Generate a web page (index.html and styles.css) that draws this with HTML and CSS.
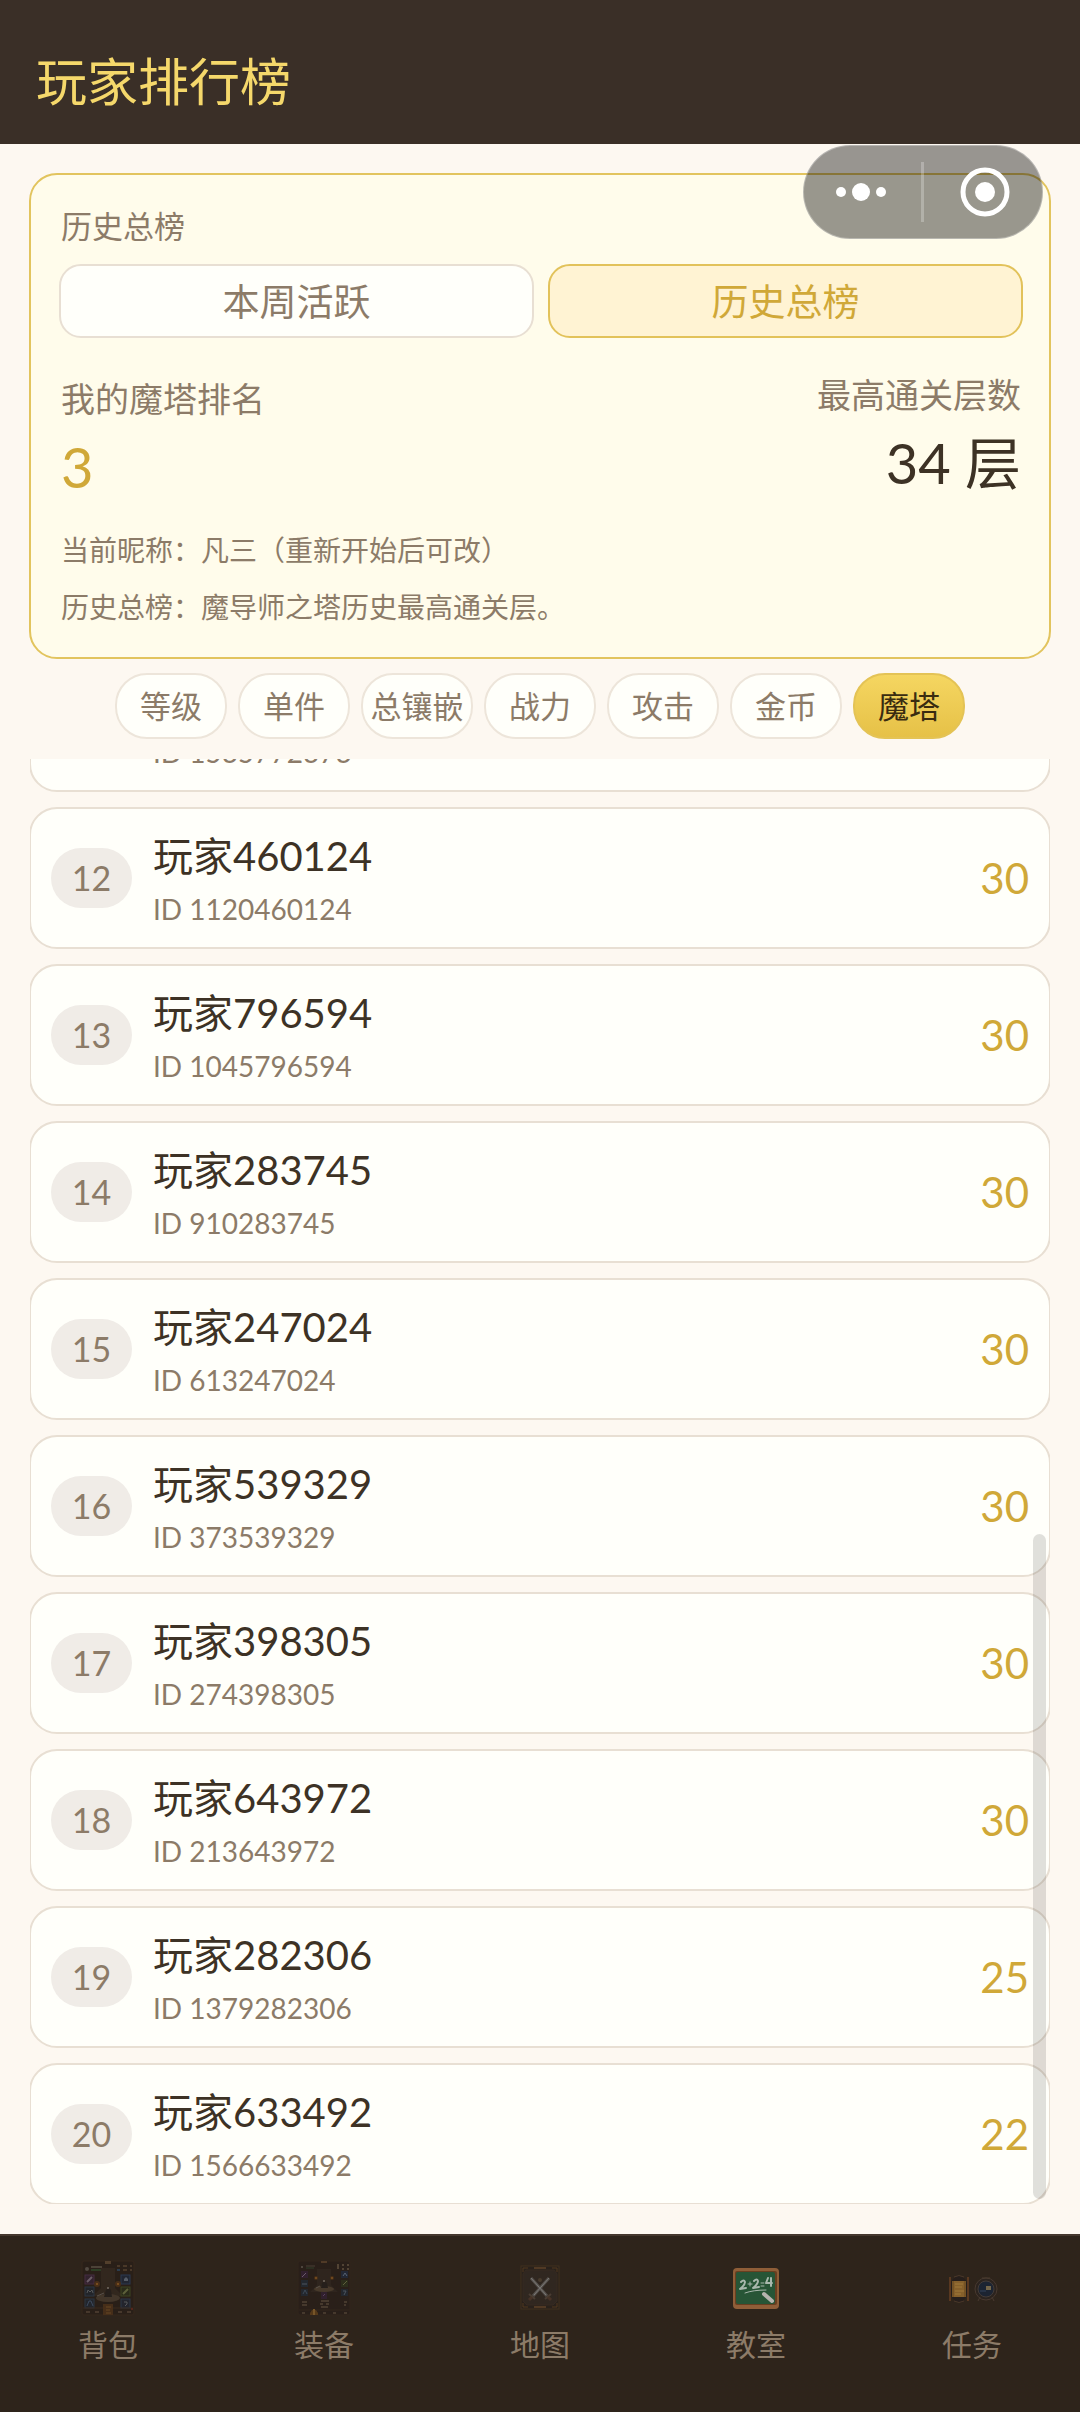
FILE: index.html
```html
<!DOCTYPE html>
<html lang="zh-Hans">
<head>
    <meta charset="UTF-8">
    <meta name="viewport" content="width=device-width, initial-scale=1.0">
    <title>玩家排行榜</title>
    <link rel="stylesheet" href="styles.css">
</head>
<body>

<header class="header">
    <h1>玩家排行榜</h1>
</header>

<div class="capsule">
    <button type="button" class="capsule-btn" aria-label="更多">
        <svg width="50" height="20" viewBox="0 0 50 20"><circle cx="5" cy="10" r="5"/><circle cx="25" cy="10" r="9"/><circle cx="45" cy="10" r="5"/></svg>
    </button>
    <span class="capsule-line"></span>
    <button type="button" class="capsule-btn capsule-close" aria-label="关闭">
        <svg width="50" height="50" viewBox="0 0 50 50"><circle class="ring" cx="25" cy="25" r="22"/><circle cx="25" cy="25" r="10"/></svg>
    </button>
</div>

<main class="main">
    <section class="card">
        <div class="card-label">历史总榜</div>
        <div class="tabs">
            <button type="button" class="tab">本周活跃</button>
            <button type="button" class="tab active">历史总榜</button>
        </div>
        <div class="stats">
            <div class="stat stat-rank">
                <div class="stat-label">我的魔塔排名</div>
                <div class="stat-value">3</div>
            </div>
            <div class="stat stat-best">
                <div class="stat-label">最高通关层数</div>
                <div class="stat-value">34 层</div>
            </div>
        </div>
        <div class="notes">
            <p>当前昵称：凡三（重新开始后可改）</p>
            <p>历史总榜：魔导师之塔历史最高通关层。</p>
        </div>
    </section>

    <div class="filters">
        <button type="button" class="filter">等级</button>
        <button type="button" class="filter">单件</button>
        <button type="button" class="filter">总镶嵌</button>
        <button type="button" class="filter">战力</button>
        <button type="button" class="filter">攻击</button>
        <button type="button" class="filter">金币</button>
        <button type="button" class="filter active">魔塔</button>
    </div>

    <div class="list-wrap">
        <ol class="list">
            <li class="row">
                <span class="rank"></span>
                <div class="player"><div class="name"></div><div class="uid">ID 1535772373</div></div>
            </li>
            <li class="row">
                <span class="rank">12</span>
                <div class="player"><div class="name">玩家460124</div><div class="uid">ID 1120460124</div></div>
                <span class="score">30</span>
            </li>
            <li class="row">
                <span class="rank">13</span>
                <div class="player"><div class="name">玩家796594</div><div class="uid">ID 1045796594</div></div>
                <span class="score">30</span>
            </li>
            <li class="row">
                <span class="rank">14</span>
                <div class="player"><div class="name">玩家283745</div><div class="uid">ID 910283745</div></div>
                <span class="score">30</span>
            </li>
            <li class="row">
                <span class="rank">15</span>
                <div class="player"><div class="name">玩家247024</div><div class="uid">ID 613247024</div></div>
                <span class="score">30</span>
            </li>
            <li class="row">
                <span class="rank">16</span>
                <div class="player"><div class="name">玩家539329</div><div class="uid">ID 373539329</div></div>
                <span class="score">30</span>
            </li>
            <li class="row">
                <span class="rank">17</span>
                <div class="player"><div class="name">玩家398305</div><div class="uid">ID 274398305</div></div>
                <span class="score">30</span>
            </li>
            <li class="row">
                <span class="rank">18</span>
                <div class="player"><div class="name">玩家643972</div><div class="uid">ID 213643972</div></div>
                <span class="score">30</span>
            </li>
            <li class="row">
                <span class="rank">19</span>
                <div class="player"><div class="name">玩家282306</div><div class="uid">ID 1379282306</div></div>
                <span class="score">25</span>
            </li>
            <li class="row">
                <span class="rank">20</span>
                <div class="player"><div class="name">玩家633492</div><div class="uid">ID 1566633492</div></div>
                <span class="score">22</span>
            </li>
        </ol>
        <div class="scrollbar"></div>
    </div>
</main>

<nav class="nav">
    <a href="#bag" class="nav-item">
        <svg class="nav-icon dim" viewBox="0 0 56 56">
            <rect x="2" y="1" width="52" height="54" rx="2" fill="#261d17" stroke="#3b2a1d"/>
            <path d="M21 8h14v20l8 8H13l8-8z" fill="#352921"/>
            <rect x="25" y="1" width="6" height="3" fill="#6b5138"/>
            <circle cx="7" cy="9" r="2" fill="#6a625b"/>
            <path d="M11 7h11" stroke="#60564b" stroke-width="2"/>
            <path d="M11 10h10" stroke="#2d4f2a" stroke-width="2"/>
            <path d="M37 6h3M43 6h4M50 6h2M43 10h4M50 10h2" stroke="#5b4632" stroke-width="2"/>
            <path d="M37 10h3" stroke="#2b4f70" stroke-width="2"/>
            <rect x="5" y="15" width="9" height="9" fill="#352139" stroke="#54305b"/>
            <path d="M7 22l5-5" stroke="#94809a" stroke-width="2"/>
            <rect x="5" y="27" width="9" height="9" fill="#1c2735" stroke="#2a425c"/>
            <path d="M7 33l1-3 2 2 2-2 1 3" stroke="#6f7a83" fill="none"/>
            <rect x="5" y="39" width="9" height="9" fill="#1b2637" stroke="#29405c"/>
            <path d="M7 46l2-5h2l2 5" stroke="#47648a" fill="none"/>
            <rect x="41" y="15" width="9" height="9" fill="#1b2840" stroke="#2a4774"/>
            <path d="M44 21v-2l2-2 2 2v2z" fill="#71829a"/>
            <rect x="41" y="27" width="9" height="9" fill="#28301a" stroke="#475a26"/>
            <path d="M43 34l5-5" stroke="#7c8b50" stroke-width="2"/>
            <rect x="41" y="39" width="9" height="9" fill="#1c2739" stroke="#2b4668"/>
            <path d="M44 42h3v2l-2 2" stroke="#717a84" fill="none"/>
            <circle cx="17" cy="24" r="3" fill="#5b3515"/><circle cx="17" cy="24" r="1" fill="#c47a26"/>
            <circle cx="38" cy="24" r="3" fill="#5b3515"/><circle cx="38" cy="24" r="1" fill="#c47a26"/>
            <ellipse cx="28" cy="38" rx="12" ry="4" fill="#514334"/>
            <path d="M24 37l2-7 2-3 3 3 1 7z" fill="#211d1c"/>
            <circle cx="28" cy="28" r="1" fill="#a59c92"/>
            <path d="M17 36l7-3" stroke="#77706a"/>
            <path d="M3 48h50" stroke="#402d1e"/>
            <rect x="23" y="44" width="10" height="11" fill="#573518"/>
            <path d="M26 47h5M26 50h4M26 53h5" stroke="#8e602b"/>
            <path d="M6 52h4M15 52h4M38 52h4M47 52h4" stroke="#584638" stroke-width="2"/>
            <circle cx="52" cy="49" r="1" fill="#872a20"/>
        </svg>
        <span>背包</span>
    </a>
    <a href="#gear" class="nav-item">
        <svg class="nav-icon dim" viewBox="0 0 56 56">
            <rect x="2" y="1" width="52" height="54" rx="2" fill="#261d18" stroke="#35271d"/>
            <path d="M21 9h14v16l7 7H14l7-7z" fill="#302720"/>
            <rect x="25" y="1" width="6" height="2" fill="#67492f"/>
            <circle cx="6" cy="7" r="1" fill="#77706a"/>
            <path d="M10 6h9" stroke="#5d5248"/><path d="M10 8h8" stroke="#315132"/>
            <path d="M42 4v5M47 4v2M52 4v2M47 8v2M52 8v2" stroke="#6a5945" stroke-width="2"/>
            <rect x="5" y="11" width="7" height="7" fill="#331f3c"/>
            <path d="M6 17l4-4" stroke="#947da0"/>
            <rect x="5" y="20" width="7" height="7" fill="#1d2b3d"/><path d="M6 24h5" stroke="#62768c"/>
            <rect x="5" y="29" width="7" height="7" fill="#1c293b"/><path d="M7 34l2-4 2 4" stroke="#47627f" fill="none"/>
            <rect x="45" y="11" width="7" height="7" fill="#1c2c47"/><path d="M47 16l2-3 2 3" stroke="#758bab" fill="none"/>
            <rect x="45" y="20" width="7" height="7" fill="#2b341b"/><path d="M47 25l4-4" stroke="#7e8b52"/>
            <rect x="45" y="29" width="7" height="7" fill="#1c293b"/><path d="M47 31h3l-2 4" stroke="#60758b" fill="none"/>
            <circle cx="20" cy="18" r="2" fill="#5b3515"/><circle cx="20" cy="18" r="1" fill="#b06f25"/>
            <circle cx="36" cy="18" r="2" fill="#5b3515"/><circle cx="36" cy="18" r="1" fill="#b06f25"/>
            <ellipse cx="28" cy="29" rx="10" ry="3" fill="#594836"/>
            <path d="M25 28l1-5 2-2 3 2 1 5z" fill="#211d1c"/><circle cx="28" cy="21" r="1" fill="#a39a8e"/>
            <path d="M20 28l4-2" stroke="#77706a"/>
            <rect x="25" y="32" width="6" height="7" fill="#321e3a"/><path d="M27 36l2-2" stroke="#755288"/>
            <path d="M6 42h5M6 45h5M25 41h8M24 44h3M30 44h3M25 47h7M48 42h3M48 45h2" stroke="#57483a" stroke-width="2"/>
            <path d="M3 50h50" stroke="#35271d"/>
            <path d="M14 53l2-3h4l2 3v2h-8z" fill="#704719"/><path d="M18 49v6" stroke="#a87632" stroke-width="2"/>
            <path d="M6 53h3M27 53h3M37 53h3M48 53h3" stroke="#57483a" stroke-width="2"/>
        </svg>
        <span>装备</span>
    </a>
    <a href="#map" class="nav-item">
        <svg class="nav-icon" viewBox="0 0 56 56">
            <rect x="9" y="6" width="38" height="43" fill="#29211b" stroke="#40301f"/>
            <path d="M14 10h28l3 4v27l-4 4H15l-4-4V14z" fill="#302720" stroke="#362a21"/>
            <path d="M22 8h12M22 47h12" stroke="#503924" stroke-width="2"/>
            <path d="M11 12V8h5M40 8h5v4M11 43v4h5M40 47h5v-4" fill="none" stroke="#51391f"/>
            <circle cx="28" cy="20" r="2" fill="#493b2d"/>
            <path d="M19 18l16 18M37 18L21 36" stroke="#55504c" stroke-width="3"/>
            <path d="M19 18l15 17M37 18L22 35" stroke="#7b7976"/>
            <path d="M17 34l6 5M39 34l-6 5" stroke="#4a3d33" stroke-width="2"/>
            <path d="M20 37l-3 3M36 37l3 3" stroke="#473327" stroke-width="3"/>
        </svg>
        <span>地图</span>
    </a>
    <a href="#class" class="nav-item">
        <svg class="nav-icon" viewBox="0 0 56 56">
            <rect x="5" y="8" width="46" height="41" rx="4" fill="#8f5e38"/>
            <rect x="7" y="11" width="42" height="34" rx="2" fill="#693f20"/>
            <rect x="8" y="12" width="39" height="32" rx="2" fill="#275536"/>
            <g fill="none" stroke="#a9b8ad" stroke-width="2" stroke-linecap="round" stroke-linejoin="round">
                <path d="M13 22q3-3 4 0 0 3-5 7l6-1"/>
                <path d="M20 24h4M22 22v4" stroke-width="1"/>
                <path d="M26 21q3-3 4 0 0 3-5 7l6-1"/>
                <path d="M33 23h3M33 26h3" stroke-width="1"/>
                <path d="M40 18l-2 5h6M43 18v8"/>
                <path d="M17 33q8-3 21-3" stroke-width="1"/>
            </g>
            <path d="M36 34l8 7" stroke="#b6b4af" stroke-width="4" stroke-linecap="round"/>
        </svg>
        <span>教室</span>
    </a>
    <a href="#task" class="nav-item">
        <svg class="nav-icon" viewBox="0 0 56 56">
            <ellipse cx="15" cy="29" rx="9" ry="13" fill="#261e1b"/>
            <path d="M6 17v24M24 17v24" stroke="#593820" stroke-width="2"/>
            <path d="M10 17q5-3 10 0M10 41q5 3 10 0" fill="none" stroke="#493729"/>
            <rect x="8" y="21" width="14" height="16" fill="#86602b"/>
            <path d="M11 24h8M11 27h7M11 31h9M11 34h6" stroke="#9f783b"/>
            <path d="M9 21v16M21 21v16" stroke="#634421"/>
            <circle cx="42" cy="29" r="11" fill="#2b231e" stroke="#483930"/>
            <circle cx="42" cy="29" r="8" fill="#1c2432" stroke="#443c38"/>
            <path d="M36 37l-2 4M48 37l2 4M38 18h8" stroke="#493a2f"/>
            <path d="M36 31h6" stroke="#32435b"/>
            <rect x="42" y="26" width="5" height="4" fill="#74664a"/>
        </svg>
        <span>任务</span>
    </a>
</nav>

</body>
</html>
```
FILE: styles.css
```css
* {
    box-sizing: border-box;
}
body {
    display: flex;
    flex-direction: column;
    height: 100vh;
    margin: 0;
    font-family: Lato, "Noto Sans CJK SC", sans-serif;
    color: #3d3225;
    background-color: #fdf8f1;
}
button {
    padding: 0;
    font-family: inherit;
    cursor: pointer;
}
.header {
    display: flex;
    align-items: flex-end;
    height: 144px;
    padding: 0 36px 24px;
    background-color: #3a2f27;
}
h1 {
    margin: 0;
    font-size: 51px;
    font-weight: 400;
    line-height: 76px;
    color: #f5d86b;
}

/* floating capsule */
.capsule {
    position: absolute;
    top: 145px;
    right: 37px;
    z-index: 2;
    display: flex;
    align-items: center;
    width: 240px;
    height: 94px;
    border: 1px solid rgba(255, 255, 255, 0.3);
    border-radius: 47px;
    background-color: rgba(0, 0, 0, 0.4);
}
.capsule-btn {
    display: flex;
    flex: 1;
    align-items: center;
    justify-content: center;
    padding-right: 2px;
    border: none;
    background: none;
}
.capsule-close {
    padding: 0 0 0 4px;
}
.capsule-btn svg {
    fill: #fff;
}
.capsule-btn .ring {
    fill: none;
    stroke: #fff;
    stroke-width: 5;
}
.capsule-line {
    width: 3px;
    height: 60px;
    background-color: rgba(255, 255, 255, 0.25);
}

.main {
    display: flex;
    flex: 1;
    flex-direction: column;
    min-height: 0;
    padding: 29px 29px 30px;
}

/* summary card */
.card {
    padding: 23px 26px 21px 28px;
    border: 2px solid #e2c45e;
    border-radius: 28px;
    background-color: #fffceb;
}
.card-label {
    padding-left: 2px;
    font-size: 31px;
    line-height: 56px;
    color: #8c7b68;
}
.tabs {
    display: flex;
    gap: 14px;
    margin-top: 10px;
}
.tab {
    flex: 1;
    height: 74px;
    padding-bottom: 3px;
    border: 2px solid #e8dfd3;
    border-radius: 22px;
    font-size: 37px;
    color: #8c7b68;
    background-color: #fffffa;
}
.tab.active {
    border-color: #e2c25a;
    color: #d0a838;
    background-color: #fff3d3;
}
.stats {
    display: flex;
    justify-content: space-between;
    margin-top: 32px;
    padding: 0 2px;
}
.stat-rank {
    padding-top: 4px;
}
.stat-best {
    text-align: right;
}
.stat-label {
    font-size: 34px;
    line-height: 50px;
    color: #8c7b68;
}
.stat-value {
    font-size: 56px;
    line-height: 86px;
}
.stat-rank .stat-value {
    color: #d0a838;
}
.notes {
    margin-top: 12px;
    padding-left: 2px;
    font-size: 28px;
    line-height: 57px;
    color: #8c7b68;
}
.notes p {
    margin: 0;
}

/* category filters */
.filters {
    display: flex;
    justify-content: center;
    gap: 11px;
    padding: 14px 0 20px;
}
.filter {
    width: 112px;
    height: 66px;
    padding-bottom: 3px;
    border: 2px solid #ede5da;
    border-radius: 32px;
    font-size: 31px;
    white-space: nowrap;
    color: #8c7b68;
    background-color: #fffffa;
}
.filter.active {
    border-color: #e4c355;
    color: #3a2c10;
    background-image: linear-gradient(#f5d661, #e6c147);
}

/* ranking list, kept at its bottom end */
.list-wrap {
    position: relative;
    display: flex;
    flex: 1;
    min-height: 0;
    margin: 0 1px;
    overflow: hidden;
}
.list {
    display: flex;
    flex: 1;
    flex-direction: column;
    justify-content: flex-end;
    gap: 15px;
    margin: 0 -1px -1px;
    padding: 0;
    list-style: none;
}
.row {
    display: flex;
    flex-shrink: 0;
    align-items: center;
    gap: 21px;
    height: 142px;
    padding: 0 20px;
    border: 2px solid #e8dfd3;
    border-radius: 28px;
    background-color: #fffffa;
}
.rank {
    width: 81px;
    border-radius: 30px;
    font-size: 34px;
    line-height: 60px;
    text-align: center;
    color: #8c7b68;
    background-color: #f0ece7;
}
.player {
    flex: 1;
    padding-top: 6px;
}
.name {
    min-height: 56px;
    font-size: 40px;
    line-height: 56px;
}
.uid {
    font-size: 28px;
    line-height: 50px;
    color: #8c7b68;
}
.score {
    font-size: 42px;
    color: #d0a838;
}
.scrollbar {
    position: absolute;
    right: 4px;
    bottom: 5px;
    width: 13px;
    height: 46%;
    border-radius: 7px;
    background-color: rgba(0, 0, 0, 0.12);
}

/* bottom navigation */
.nav {
    display: flex;
    height: 178px;
    padding-top: 24px;
    border-top: 2px solid #45382e;
    background-color: #2e241b;
}
.nav-item {
    display: flex;
    flex: 1;
    flex-direction: column;
    align-items: center;
    gap: 6px;
    font-size: 30px;
    line-height: 44px;
    color: #8c7b68;
    text-decoration: none;
}
.nav-icon {
    width: 56px;
    height: 56px;
}
.nav-icon.dim {
    opacity: 0.6;
}
```
